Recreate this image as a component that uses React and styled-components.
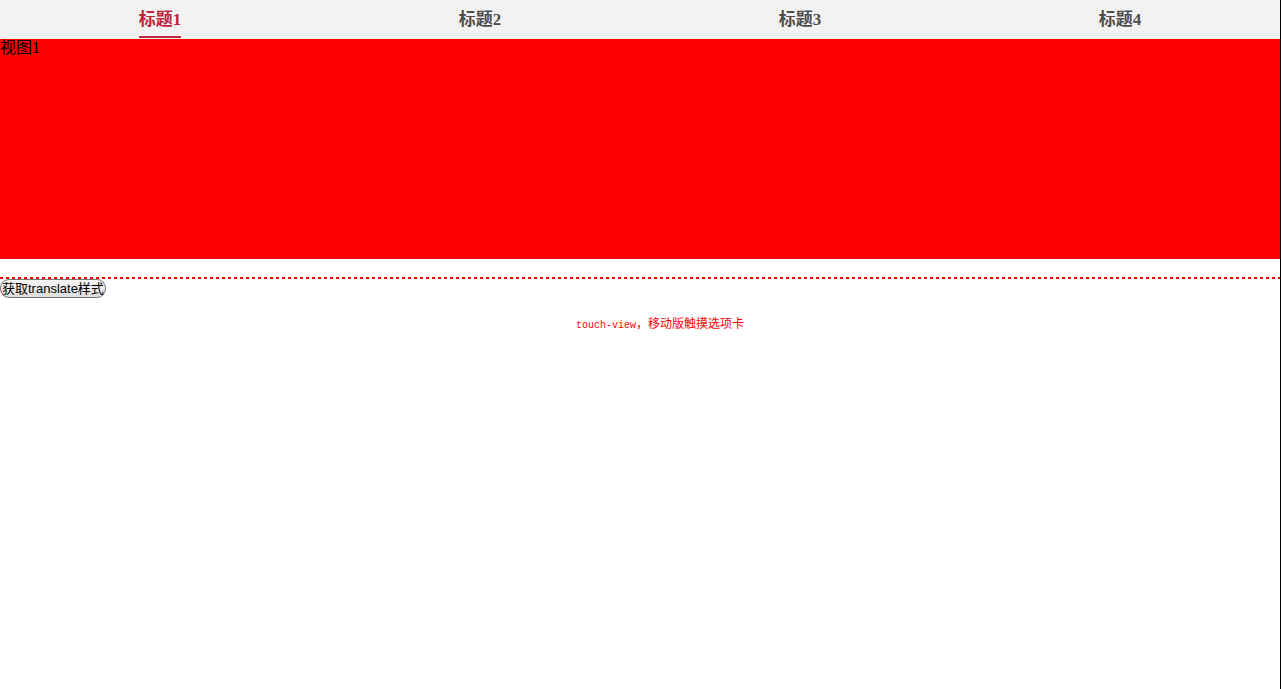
import styled, { createGlobalStyle } from 'styled-components';

const GlobalStyle = createGlobalStyle`
  html, body {
    margin: 0;
    padding: 0;
    background: #fff;
  }

  body {
    font-family: 'Liberation Serif', 'Noto Sans CJK SC', serif;
  }
`;

const Page = styled.div`
  width: 1280px;
  min-height: 689px;
  border-right: 1px solid #000;
`;

const TabBar = styled.ul`
  display: flex;
  margin: 0;
  padding: 0;
  height: 39px;
  list-style: none;
  background-color: #f2f2f2;
`;

const Tab = styled.li`
  flex: 1;
  display: flex;
  justify-content: center;
  align-items: flex-end;

  span {
    display: inline-block;
    padding-bottom: 6px;
    margin-bottom: 1px;
    font-size: 17px;
    font-weight: bold;
    line-height: 20px;
    color: ${({ active }) => (active ? '#c0233a' : '#4d4d4d')};
    border-bottom: 2px solid ${({ active }) => (active ? '#c0233a' : 'transparent')};
  }
`;

const Views = styled.div`
  height: 220px;
  overflow: hidden;
`;

const View = styled.div`
  height: 220px;
  background-color: ${({ color }) => color};
  font-size: 16px;
  line-height: 18px;
  color: #000;
`;

const Divider = styled.div`
  margin-top: 18px;
  height: 2px;
  background: repeating-linear-gradient(to right, #f00 0 3px, transparent 3px 6px);
`;

const Button = styled.button`
  display: block;
  margin: 0;
  padding: 0 1px;
  height: 19px;
  line-height: 15px;
  font-family: 'Liberation Sans', 'Noto Sans CJK SC', sans-serif;
  font-size: 13px;
  color: #000;
  border: 1px solid #767676;
  border-radius: 9px;
  background: linear-gradient(#f6f6f6, #dedede);
`;

const Note = styled.p`
  margin: 18px 0 0;
  padding-left: 40px;
  text-align: center;
  font-family: 'Noto Sans CJK SC', sans-serif;
  font-size: 12px;
  line-height: 14px;
  color: #f00;

  span {
    font-family: 'Liberation Mono', monospace;
    font-size: 10px;
  }
`;

const tabs = ['标题1', '标题2', '标题3', '标题4'];

const App = () => {
  const current = 0;

  return (
    <>
      <GlobalStyle />
      <Page>
        <TabBar>
          {tabs.map((title, i) => (
            <Tab key={title} active={i === current}>
              <span>{title}</span>
            </Tab>
          ))}
        </TabBar>
        <Views>
          <View color='#ff0000'>视图1</View>
        </Views>
        <Divider />
        <Button>获取translate样式</Button>
        <Note>
          <span>touch-view</span>，移动版触摸选项卡
        </Note>
      </Page>
    </>
  );
};

export default App;
